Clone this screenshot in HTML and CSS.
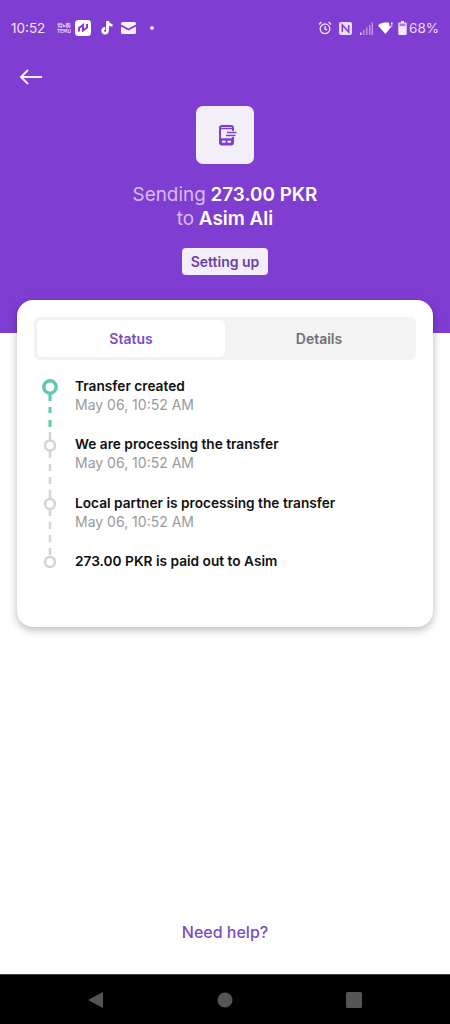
FILE: index.html
```html
<!DOCTYPE html>
<html lang="en">
<head>
    <meta charset="UTF-8">
    <meta name="viewport" content="width=device-width, initial-scale=1.0">
    <title>Transfer status</title>
    <link rel="stylesheet" href="styles.css">
</head>
<body>
    <div class="screen">
        <header class="top">
            <!-- Status bar -->
            <div class="status-bar">
                <div class="status-left">
                    <span class="time">10:52</span>
                    <span class="temu">特ь购<br>TEMU</span>
                    <svg class="ic-app" width="16" height="16" viewBox="0 0 16 16">
                        <rect width="16" height="16" rx="3.500" fill="#fff"/>
                        <path d="M4 11.500 V8 L8 5 V10.500 L12 7.500 V4" fill="none" stroke="#7f3dd2" stroke-width="2"/>
                    </svg>
                    <svg class="ic-tiktok" width="14" height="16" viewBox="0 0 14 16">
                        <path d="M7.500 1 V10.800 A2.400 2.400 0 1 1 5.200 8.400 M7.500 1 C7.900 3.600 9.800 5.200 12.500 5.400" fill="none" stroke="#fff" stroke-width="2.800"/>
                    </svg>
                    <svg class="ic-mail" width="15" height="12" viewBox="0 0 15 12">
                        <path d="M1.500 0 H13.500 A1.500 1.500 0 0 1 15 1.500 V2.500 L7.500 6.500 L0 2.500 V1.500 A1.500 1.500 0 0 1 1.500 0 Z M0 4.400 L7.500 8.400 L15 4.400 V10.500 A1.500 1.500 0 0 1 13.500 12 H1.500 A1.500 1.500 0 0 1 0 10.500 Z" fill="#f6effd"/>
                    </svg>
                    <span class="note-dot"></span>
                </div>
                <div class="status-right">
                    <svg width="14" height="14" viewBox="0 0 14 14" fill="none" stroke="#eadcf9" stroke-width="1.400">
                        <circle cx="7" cy="7.800" r="4.800"/>
                        <path d="M7 5 V8 L9 9 M1 3.400 L3.400 1 M13 3.400 L10.600 1"/>
                    </svg>
                    <svg class="ic-nfc" width="13" height="13" viewBox="0 0 13 13">
                        <rect width="13" height="13" rx="2" fill="#eadcf9"/>
                        <path d="M3.300 10 V3 L9.700 10 V3" fill="none" stroke="#7f3dd2" stroke-width="1.500"/>
                    </svg>
                    <svg class="ic-signal" width="13" height="13" viewBox="0 0 13 13" fill="#b995e8">
                        <rect x="0" y="10.500" width="1.500" height="2.500" fill="#eadcf9"/>
                        <rect x="3" y="8" width="1.500" height="5"/>
                        <rect x="6" y="5.500" width="1.500" height="7.500"/>
                        <rect x="9" y="3" width="1.500" height="10"/>
                        <rect x="11.500" y="0.500" width="1.500" height="12.500"/>
                    </svg>
                    <svg class="ic-wifi" width="16" height="12" viewBox="0 0 16 12">
                        <path d="M0 3.400 C2 1.500 4.600 .6 7.200 .6 L10.800 .6 L11.600 4.200 L13.600 4.400 L7.400 12 Z" fill="#fff"/>
                        <path d="M13 .4 L14.600 .4 L14.400 2.800 L13.200 2.800 Z M13.200 3.400 H14.400 V4.400 H13.200 Z" fill="#fff"/>
                    </svg>
                    <svg class="ic-batt" width="9" height="14" viewBox="0 0 9 14">
                        <path d="M3 0 H6 V1.400 H7.500 A1.200 1.200 0 0 1 8.700 2.600 V12.800 A1.200 1.200 0 0 1 7.500 14 H1.500 A1.200 1.200 0 0 1 .3 12.800 V2.600 A1.200 1.200 0 0 1 1.500 1.400 H3 Z" fill="#f1e8fb"/>
                        <rect x="1.500" y="2.600" width="6" height="2.500" fill="#a67de0"/>
                    </svg>
                    <span class="batt-text">68%</span>
                </div>
            </div>

            <div class="back-row">
                <svg width="24" height="16" viewBox="0 0 24 16" fill="none" stroke="#f5eefc" stroke-width="2">
                    <path d="M23 8 H2 M9 1 L2 8 L9 15"/>
                </svg>
            </div>

            <div class="tile">
                <svg width="24" height="24" viewBox="0 0 24 24" fill="none">
                    <rect x="7" y="3" width="13" height="18.500" rx="2" stroke="#7f3dd2" stroke-width="2"/>
                    <path d="M7 5.500 H20 M7 16 H20" stroke="#7f3dd2" stroke-width="1.500"/>
                    <rect x="7" y="16" width="13" height="5" fill="#7f3dd2"/>
                    <rect x="9" y="17.700" width="3.500" height="2" fill="#f3eff8"/>
                    <rect x="14.500" y="17.700" width="3.500" height="2" fill="#f3eff8"/>
                    <rect x="13" y="8" width="11" height="6" fill="#f3eff8"/>
                    <path d="M14 9.500 H23.500 M13 12.500 H22.500" stroke="#7f3dd2" stroke-width="1.400"/>
                </svg>
            </div>

            <h1 class="headline">
                <span class="soft">Sending</span> 273.00 PKR<br>
                <span class="soft">to</span> Asim Ali
            </h1>

            <div class="pill">Setting up</div>
        </header>

        <section class="card">
            <div class="tabs">
                <div class="tab tab-active">Status</div>
                <div class="tab">Details</div>
            </div>

            <div class="timeline">
                <svg class="track" width="20" height="196" viewBox="0 0 20 196" fill="none">
                    <!-- Created -->
                    <circle cx="10" cy="9" r="6.200" stroke="#5ec8b0" stroke-width="3.500"/>
                    <path d="M10 16 V23 M10 29 V35 M10 42 V49" stroke="#5ec8b0" stroke-width="3"/>
                    <!-- Pending steps -->
                    <g stroke="#d4d4d4" stroke-width="2.500">
                        <path d="M10 54 V62"/>
                        <circle cx="10" cy="67.500" r="5"/>
                        <path d="M10 73 V80 M10 86 V93 M10 99 V106 M10 112 V120"/>
                        <circle cx="10" cy="126" r="5"/>
                        <path d="M10 131 V138 M10 144 V151 M10 157 V164 M10 170 V177"/>
                        <circle cx="10" cy="184" r="5"/>
                    </g>
                </svg>
                <div class="steps">
                    <div class="step">
                        <div class="step-title">Transfer created</div>
                        <div class="step-date">May 06, 10:52 AM</div>
                    </div>
                    <div class="step">
                        <div class="step-title">We are processing the transfer</div>
                        <div class="step-date">May 06, 10:52 AM</div>
                    </div>
                    <div class="step">
                        <div class="step-title">Local partner is processing the transfer</div>
                        <div class="step-date">May 06, 10:52 AM</div>
                    </div>
                    <div class="step">
                        <div class="step-title">273.00 PKR is paid out to Asim</div>
                    </div>
                </div>
            </div>
        </section>

        <div class="help">Need help?</div>

        <!-- Android nav -->
        <nav class="nav-bar">
            <svg width="16" height="16" viewBox="0 0 16 16"><path d="M15 0 V16 L0 8 Z" fill="#555"/></svg>
            <svg width="16" height="16" viewBox="0 0 16 16"><circle cx="8" cy="8" r="7.500" fill="#555"/></svg>
            <svg width="16" height="16" viewBox="0 0 16 16"><rect width="16" height="16" rx="1.500" fill="#555"/></svg>
        </nav>
    </div>
</body>
</html>
```

FILE: styles.css
```css
* {
    box-sizing: border-box;
}

body {
    margin: 0;
    background: #fff;
    font-family: Inter, "Noto Sans", sans-serif;
}

.screen {
    display: flex;
    flex-direction: column;
    height: 1024px;
    overflow: hidden;
}

.top {
    display: flex;
    flex-direction: column;
    align-items: center;
    height: 333px;
    background: #7f3dd2;
    color: #fff;
}

/* Status bar */
.status-bar {
    display: flex;
    justify-content: space-between;
    align-items: center;
    width: 100%;
    height: 56px;
    padding: 0 11px;
}

.status-left,
.status-right {
    display: flex;
    align-items: center;
}

.time {
    width: 42px;
    font-size: 13.500px;
    color: #f1e8fb;
}

.temu {
    width: 22px;
    font-size: 5px;
    font-weight: 700;
    line-height: 6px;
    color: #eadcf9;
    text-align: center;
    font-family: "Noto Sans CJK SC", Inter, sans-serif;
}

.ic-app {
    margin-right: 9px;
}

.ic-tiktok {
    margin-right: 8px;
}

.ic-mail {
    margin-right: 13px;
    margin-left: -1px;
}

.note-dot {
    width: 4px;
    height: 4px;
    margin-left: 1px;
    border-radius: 50%;
    background: #f1e8fb;
}

.status-right {
    gap: 7px;
}

.ic-signal {
    margin-left: 1px;
}

.ic-wifi {
    margin-left: -2px;
}

.ic-batt {
    margin-left: -3px;
    margin-right: -5px;
}

.batt-text {
    font-size: 13.500px;
    color: #eadcf9;
}

.back-row {
    width: 100%;
    height: 24px;
    margin-top: 9px;
    padding: 4px 0 0 19px;
}

.tile {
    display: flex;
    justify-content: center;
    align-items: center;
    width: 58px;
    height: 58px;
    margin-top: 17px;
    background: #f3eff8;
    border-radius: 7px;
}

.headline {
    margin: 19px 0 0;
    font-size: 18.900px;
    font-weight: 600;
    line-height: 24px;
    text-align: center;
}

.soft {
    font-weight: 400;
    color: #d6bdf5;
}

.pill {
    margin-top: 17px;
    padding: 0 8.500px;
    height: 27px;
    line-height: 27px;
    background: #f3eef9;
    border-radius: 4px;
    color: #6b3fa8;
    font-size: 14px;
    font-weight: 600;
}

/* Card */
.card {
    height: 327px;
    margin: -33px 17px 0;
    padding: 17px;
    background: #fff;
    border-radius: 16px;
    box-shadow: 0 3px 8px rgba(0, 0, 0, 0.28);
}

.tabs {
    display: grid;
    grid-template-columns: 188px 1fr;
    height: 43px;
    padding: 3px;
    background: #f3f3f3;
    border-radius: 6px;
}

.tab {
    display: flex;
    justify-content: center;
    align-items: center;
    font-size: 14px;
    font-weight: 600;
    color: #707070;
}

.tab-active {
    background: #fff;
    border-radius: 5px;
    color: #7c4bc4;
}

.timeline {
    display: flex;
    margin-top: 17px;
    padding-left: 6px;
}

.track {
    margin-top: 1px;
}

.steps {
    margin-left: 15px;
}

.step {
    height: 58.300px;
    line-height: 19px;
}

.step-title {
    font-size: 13.700px;
    font-weight: 600;
    color: #111;
}

.step-date {
    margin-top: -1px;
    font-size: 14px;
    color: #9a9a9a;
}

.help {
    margin-top: auto;
    margin-bottom: 32px;
    text-align: center;
    font-size: 16px;
    font-weight: 500;
    line-height: 20px;
    color: #7c4bc4;
}

.nav-bar {
    display: flex;
    justify-content: space-between;
    align-items: center;
    height: 50px;
    padding: 0 88px;
    background: #000;
    border-top: 1px solid #444;
}
```
